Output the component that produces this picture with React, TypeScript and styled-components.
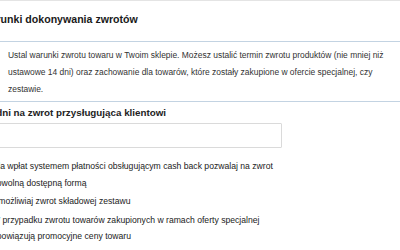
import React from "react"
import styled, { createGlobalStyle } from "styled-components"

const GlobalStyle = createGlobalStyle`
    html, body {
        margin: 0;
        padding: 0;
        background: #ffffff;
        overflow: hidden;
    }
    body {
        font-family: "Liberation Sans", Arial, sans-serif;
        color: #222222;
    }
`

// the visible frame is a window into a wider settings page, its left part is off screen
const Page = styled.div`
    width: 480px;
    margin-left: -40px;
    border-top: 1px solid #e4e4e4;
`

const Header = styled.h2`
    margin: 0;
    padding: 12px 0 15px 21px;
    font-size: 10.6px;
    line-height: 13px;
    font-weight: 700;
    color: #1a1a1a;
    border-bottom: 1px solid #c3d3e2;
`

const InfoBox = styled.div`
    padding: 5px 40px 3px 48px;
    border-bottom: 1px solid #c3d3e2;
    font-size: 8.45px;
    line-height: 17px;
    color: #333333;
`

const Form = styled.div`
    display: flex;
    flex-direction: column;
    padding: 5px 0 0 3px;
    width: 319px;
`

const FieldLabel = styled.label`
    font-size: 9.8px;
    font-weight: 700;
    line-height: 12px;
    color: #222222;
`

const TextInput = styled.input`
    box-sizing: border-box;
    height: 25px;
    margin: 4px 0 0 0;
    padding: 0 6px;
    border: 1px solid #dadada;
    border-radius: 1px;
    background: #ffffff;
    outline: none;
`

const Options = styled.div`
    display: flex;
    flex-direction: column;
    gap: 2px;
    margin-top: 10px;
`

const Option = styled.label`
    display: flex;
    align-items: flex-start;
    gap: 16px;
    font-size: 8.65px;
    line-height: 16.5px;
    color: #222222;
`

const Box = styled.input`
    flex: none;
    margin: 2px 0 0 0;
    width: 13px;
    height: 13px;
`

const OptionText = styled.span`
    flex: 1;
`

const options = [
    "Dla wpłat systemem płatności obsługującym cash back pozwalaj na zwrot dowolną dostępną formą",
    "Umożliwiaj zwrot składowej zestawu",
    "W przypadku zwrotu towarów zakupionych w ramach oferty specjalnej obowiązują promocyjne ceny towaru",
]

const App: React.FC = () =>
{
    return (
        <>
            <GlobalStyle />
            <Page>
                <Header>Warunki dokonywania zwrotów</Header>
                <InfoBox>
                    Ustal warunki zwrotu towaru w Twoim sklepie. Możesz ustalić termin zwrotu produktów (nie mniej niż
                    ustawowe 14 dni) oraz zachowanie dla towarów, które zostały zakupione w ofercie specjalnej, czy
                    zestawie.
                </InfoBox>
                <Form>
                    <FieldLabel htmlFor="days">Liczba dni na zwrot przysługująca klientowi</FieldLabel>
                    <TextInput id="days" type="text" />
                    <Options>
                        {options.map((text) => (
                            <Option key={text}>
                                <Box type="checkbox" />
                                <OptionText>{text}</OptionText>
                            </Option>
                        ))}
                    </Options>
                </Form>
            </Page>
        </>
    )
}

export default App
